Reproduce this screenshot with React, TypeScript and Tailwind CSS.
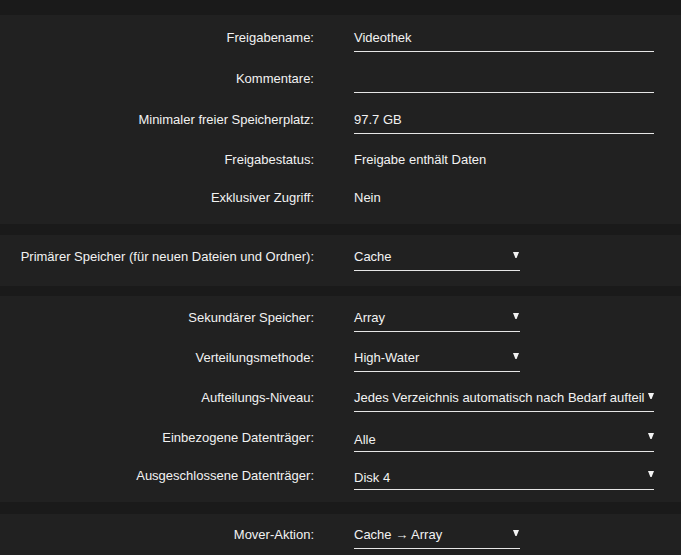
import React from "react";

type Row = {
  label: string;
  kind: "input" | "text" | "select" | "multi";
  value: string;
  wide?: boolean;
  space?: string;
};

const font = { fontFamily: '"Liberation Sans", Arial, sans-serif' };

function Caret() {
  return (
    <svg width="6" height="6" viewBox="0 0 6 6" className="shrink-0 -mt-[3px]">
      <polygon points="0,0 6,0 3.6,6 2.4,6" fill="#f2f2f2" />
    </svg>
  );
}

function Field({ row }: { row: Row }) {
  if (row.kind === "text") {
    return <div className="h-[28px] flex items-center">{row.value}</div>;
  }
  if (row.kind === "input") {
    return (
      <div className="w-[300px] h-[28px] flex items-center border-b border-[#e6e6e6]">
        {row.value}
      </div>
    );
  }
  return (
    <div
      className={
        row.wide
          ? "w-[300px] h-[28px] flex items-center justify-between border-b border-[#e6e6e6]"
          : "w-[166px] h-[28px] flex items-center justify-between border-b border-[#e6e6e6] pr-[1px]"
      }
    >
      <span className={row.kind === "multi" ? "whitespace-nowrap pt-[4px]" : "whitespace-nowrap"}>
        {row.value}
      </span>
      <Caret />
    </div>
  );
}

function Section({ rows, className }: { rows: Row[]; className: string }) {
  return (
    <div className={"bg-[#212121] flex flex-col " + className}>
      {rows.map((row) => (
        <div key={row.label} className={"flex items-center h-[28px] " + (row.space ?? "")}>
          <div className="w-[314px] shrink-0 text-right">{row.label}</div>
          <div className="ml-[40px]">
            <Field row={row} />
          </div>
        </div>
      ))}
    </div>
  );
}

export default function App() {
  return (
    <div
      className="min-h-screen bg-[#1a1a1a] pt-[15px] text-[13px] text-[#f2f2f2] overflow-hidden"
      style={font}
    >
      <Section
        className="pt-[9px] pb-[12px]"
        rows={[
          { label: "Freigabename:", kind: "input", value: "Videothek" },
          { label: "Kommentare:", kind: "input", value: "", space: "mt-[13px]" },
          {
            label: "Minimaler freier Speicherplatz:",
            kind: "input",
            value: "97.7 GB",
            space: "mt-[13px]",
          },
          {
            label: "Freigabestatus:",
            kind: "text",
            value: "Freigabe enthält Daten",
            space: "mt-[12px]",
          },
          { label: "Exklusiver Zugriff:", kind: "text", value: "Nein", space: "mt-[10px]" },
        ]}
      />
      <Section
        className="mt-[11px] pt-[8px] pb-[15px]"
        rows={[
          {
            label: "Primärer Speicher (für neuen Dateien und Ordner):",
            kind: "select",
            value: "Cache",
          },
        ]}
      />
      <Section
        className="mt-[10px] pt-[8px] pb-[12px]"
        rows={[
          { label: "Sekundärer Speicher:", kind: "select", value: "Array" },
          {
            label: "Verteilungsmethode:",
            kind: "select",
            value: "High-Water",
            space: "mt-[12px]",
          },
          {
            label: "Aufteilungs-Niveau:",
            kind: "select",
            value: "Jedes Verzeichnis automatisch nach Bedarf aufteil",
            wide: true,
            space: "mt-[12px]",
          },
          {
            label: "Einbezogene Datenträger:",
            kind: "multi",
            value: "Alle",
            wide: true,
            space: "mt-[12px]",
          },
          {
            label: "Ausgeschlossene Datenträger:",
            kind: "multi",
            value: "Disk 4",
            wide: true,
            space: "mt-[10px]",
          },
        ]}
      />
      <Section
        className="mt-[12px] pt-[7px] pb-4"
        rows={[{ label: "Mover-Aktion:", kind: "select", value: "Cache → Array" }]}
      />
    </div>
  );
}
